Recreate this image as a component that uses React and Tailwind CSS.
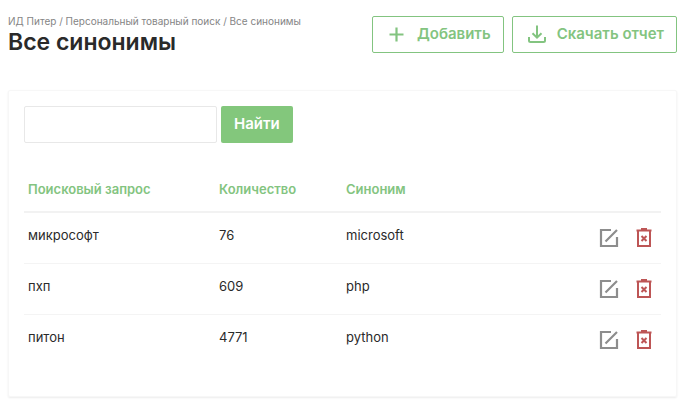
import React, { useState } from "react";

const initialSynonyms = [
  { id: 1, query: "микрософт", count: 76, synonym: "microsoft" },
  { id: 2, query: "пхп", count: 609, synonym: "php" },
  { id: 3, query: "питон", count: 4771, synonym: "python" },
];

const PlusIcon = () => (
  <svg width="20" height="20" viewBox="0 0 20 20" fill="none" stroke="currentColor" strokeWidth="2.2" aria-hidden="true">
    <path d="M9.500 2.500v14M2.500 9.500h14" />
  </svg>
);

const DownloadIcon = () => (
  <svg width="20" height="20" viewBox="0 0 20 20" fill="none" stroke="currentColor" strokeWidth="2" aria-hidden="true">
    <path d="M10 .5v12M5.500 8.200l4.500 4.500 4.500-4.500M2 12v3.500q0 1.500 1.500 1.500h13q1.500 0 1.500-1.500V12" />
  </svg>
);

const EditIcon = () => (
  <svg width="20" height="20" viewBox="0 0 20 20" fill="none" stroke="currentColor" strokeWidth="2.2" aria-hidden="true">
    <path d="M12 2H2v16h16V9M6.500 13.500L18 2" />
  </svg>
);

const TrashIcon = () => (
  <svg width="20" height="20" viewBox="0 0 20 20" fill="none" stroke="currentColor" strokeWidth="2" aria-hidden="true">
    <path d="M2.500 2.500h15M7 1h6M4 3v15h12V3M7.500 8l5 5M12.500 8l-5 5" />
  </svg>
);

export default function App() {
  const [search, setSearch] = useState("");
  const [filter, setFilter] = useState("");
  const [synonyms, setSynonyms] = useState(initialSynonyms);

  const rows = synonyms.filter(
    (row) => row.query.includes(filter) || row.synonym.includes(filter)
  );

  const handleSearch = (e) => {
    e.preventDefault();
    setFilter(search.trim().toLowerCase());
  };

  const handleDelete = (id) => {
    setSynonyms(synonyms.filter((row) => row.id !== id));
  };

  return (
    <div className="px-2 pt-4 pb-2 font-['Inter',sans-serif] text-[#2a2a2a]">
      <header className="flex items-start justify-between">
        <div>
          <nav className="text-[10px] leading-[10px] text-[#858585]">
            <a href="#home">ИД Питер</a> / <a href="#search">Персональный товарный поиск</a> / Все синонимы
          </nav>
          <h1 className="text-[23px] leading-8 font-semibold">Все синонимы</h1>
        </div>
        <div className="flex gap-2 text-[15px] font-semibold text-[#83c480]">
          <button type="button" className="flex h-[37px] items-center gap-[10px] rounded-xs border border-[#83c480] pr-3 pl-[14px]">
            <PlusIcon />
            Добавить
          </button>
          <button type="button" className="flex h-[37px] items-center gap-[10px] rounded-xs border border-[#83c480] pr-3 pl-[14px]">
            <DownloadIcon />
            Скачать отчет
          </button>
        </div>
      </header>

      <main className="mt-8 rounded-xs border border-[#f7f7f7] px-[15px] pt-[15px] pb-[31px] shadow-[0_1px_2px_rgba(0,0,0,0.08)]">
        <form onSubmit={handleSearch} className="flex gap-1">
          <input
            type="text"
            aria-label="Поисковый запрос"
            value={search}
            onChange={(e) => setSearch(e.target.value)}
            className="h-[37px] w-[193px] rounded-xs border border-[#e8e8e8] px-2 text-[13px] focus:outline-none"
          />
          <button type="submit" className="h-[37px] rounded-xs bg-[#83c77c] px-[13px] text-[15px] font-semibold text-white">
            Найти
          </button>
        </form>

        <table className="mt-6 w-full table-fixed text-left text-[13px]">
          <thead>
            <tr className="h-[45px] border-b-2 border-[#f2f2f2] text-[#83c480]">
              <th className="w-[191px] px-1 pt-0.5 font-semibold">Поисковый запрос</th>
              <th className="w-[127px] px-1 pt-0.5 font-semibold">Количество</th>
              <th className="px-1 pt-0.5 font-semibold">Синоним</th>
              <th className="w-20" aria-label="Действия" />
            </tr>
          </thead>
          <tbody>
            {rows.map((row) => (
              <tr key={row.id} className="h-[51px] border-b border-[#f4f4f4] last:border-b-0">
                <td className="px-1 pb-1">{row.query}</td>
                <td className="px-1 pb-1">{row.count}</td>
                <td className="px-1 pb-1">{row.synonym}</td>
                <td>
                  <div className="flex justify-end gap-[15px] pr-[7px]">
                    <button type="button" aria-label="Изменить" className="text-[#8d8d8d]">
                      <EditIcon />
                    </button>
                    <button type="button" aria-label="Удалить" onClick={() => handleDelete(row.id)} className="text-[#bd5555]">
                      <TrashIcon />
                    </button>
                  </div>
                </td>
              </tr>
            ))}
          </tbody>
        </table>
      </main>
    </div>
  );
}
